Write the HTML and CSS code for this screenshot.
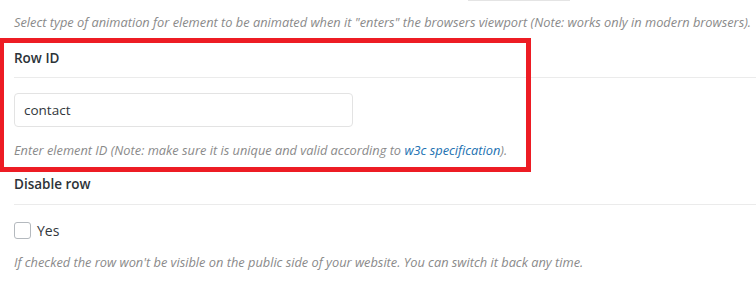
FILE: index.html
```html
<!DOCTYPE html>
<html lang="en">
<head>
    <meta charset="UTF-8">
    <meta name="viewport" content="width=device-width, initial-scale=1.0">
    <title>Row settings</title>
    <link rel="stylesheet" href="styles.css">
</head>
<body>
    <div class="select-stub"></div>
    <p class="description first">Select type of animation for element to be animated when it "enters" the browsers viewport (Note: works only in modern browsers).</p>

    <div class="field highlight">
        <div class="field-label">Row ID</div>
        <input class="text-input" type="text" value="contact">
        <p class="description">Enter element ID (Note: make sure it is unique and valid according to <a href="#">w3c specification</a>).</p>
    </div>

    <div class="field">
        <div class="field-label">Disable row</div>
        <label class="check-row">
            <input class="checkbox" type="checkbox">
            <span>Yes</span>
        </label>
        <p class="description">If checked the row won't be visible on the public side of your website. You can switch it back any time.</p>
    </div>
</body>
</html>
```

FILE: styles.css
```css
body {
    margin: 0;
    padding: 0 0 0 14px;
    font-family: "Open Sans", "Noto Sans", Arial, sans-serif;
    font-size: 14px;
    color: #32373c;
    background: #fff;
}

/* bottom edge of the select above */
.select-stub {
    margin-left: 454px;
    width: 102px;
    height: 1px;
    background: #e4e4e4;
}

.description {
    margin: 14px 0 0;
    font-size: 12.8px;
    line-height: 18px;
    font-style: italic;
    color: #8a8a8a;
}

.description.first {
    margin-top: 12px;
}

.description a {
    color: #2271b1;
    text-decoration: none;
}

.field {
    position: relative;
}

.field-label {
    margin-top: 17px;
    padding-bottom: 9px;
    line-height: 20px;
    font-size: 13.5px;
    font-weight: 600;
    color: #2c3338;
    border-bottom: 1px solid #ebebeb;
}

.field + .field .field-label {
    margin-top: 15px;
    padding-bottom: 10px;
}

/* red annotation frame */
.highlight::after {
    content: '';
    position: absolute;
    top: -10px;
    left: -15px;
    width: 532px;
    height: 134px;
    box-sizing: border-box;
    border: 5px solid #ed1c24;
    pointer-events: none;
}

.text-input {
    display: block;
    box-sizing: border-box;
    margin-top: 15px;
    width: 339px;
    height: 34px;
    padding: 0 9px;
    border: 1px solid #e3e3e3;
    border-radius: 4px;
    font-family: inherit;
    font-size: 13.5px;
    color: #32373c;
    background: #fff;
    outline: none;
}

.check-row {
    display: flex;
    align-items: center;
    gap: 6px;
    margin-top: 17px;
    height: 17px;
    line-height: 17px;
}

.checkbox {
    appearance: none;
    margin: 0;
    width: 17px;
    height: 17px;
    border: 1px solid #b4b9be;
    border-radius: 3px;
    background: #fff;
}

.check-row + .description {
    margin-top: 14px;
}
```
